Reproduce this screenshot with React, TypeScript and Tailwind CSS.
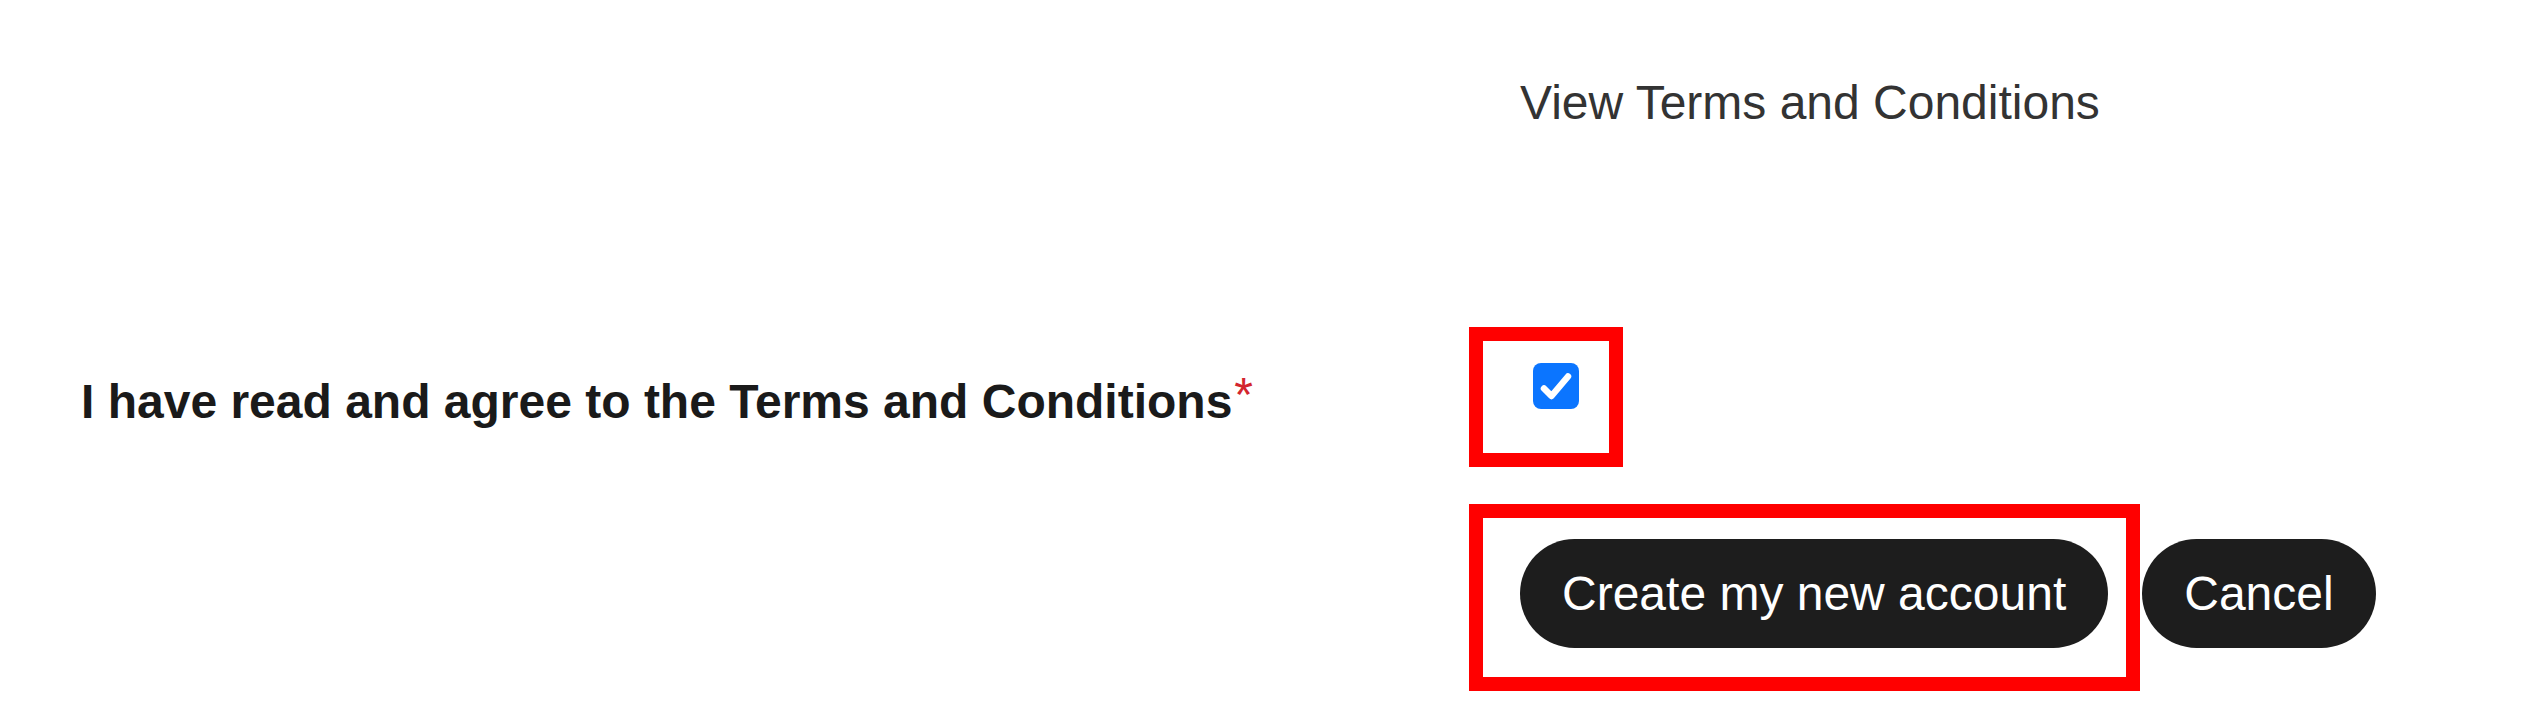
export default function App() {
  return (
    <div className="relative w-[2548px] h-[715px] bg-white overflow-hidden font-['Liberation_Sans',Arial,sans-serif]">
      <div className="pt-[79px]">
        {/* Terms link */}
        <div className="pl-[1520px] text-[48px] leading-none text-[#333333]">View Terms and Conditions</div>

        {/* Agreement row */}
        <div className="mt-[236px] flex items-start">
          <label className="w-[1520px] shrink-0 pl-[81px] pt-[15px] text-[48px] leading-none font-bold text-[#1a1a1a]">
            I have read and agree to the Terms and Conditions
            <span className="relative -top-[7px] ml-[2px] font-normal text-[#d3262e]">*</span>
          </label>
          <div className="ml-[13px] w-[46px] h-[46px] rounded-[8px] bg-[#0b75ff]">
            <svg viewBox="0 0 46 46" className="w-full h-full">
              <path
                d="M11 25.5 L18.5 33 L35 13.5"
                fill="none"
                stroke="white"
                strokeWidth="6.5"
                strokeLinecap="round"
                strokeLinejoin="round"
              />
            </svg>
          </div>
        </div>

        {/* Actions */}
        <div className="mt-[113px] pl-[1520px] flex gap-[34px]">
          <button className="h-[109px] px-[42px] rounded-full bg-[#1d1d1d] text-white text-[48px] leading-none">
            Create my new account
          </button>
          <button className="h-[109px] px-[42px] rounded-full bg-[#1d1d1d] text-white text-[48px] leading-none">
            Cancel
          </button>
        </div>
      </div>

      {/* Annotation highlights */}
      <div className="absolute left-[1469px] top-[327px] w-[154px] h-[140px] border-[14px] border-[#ff0000]" />
      <div className="absolute left-[1469px] top-[504px] w-[671px] h-[187px] border-[14px] border-[#ff0000]" />
    </div>
  );
}
